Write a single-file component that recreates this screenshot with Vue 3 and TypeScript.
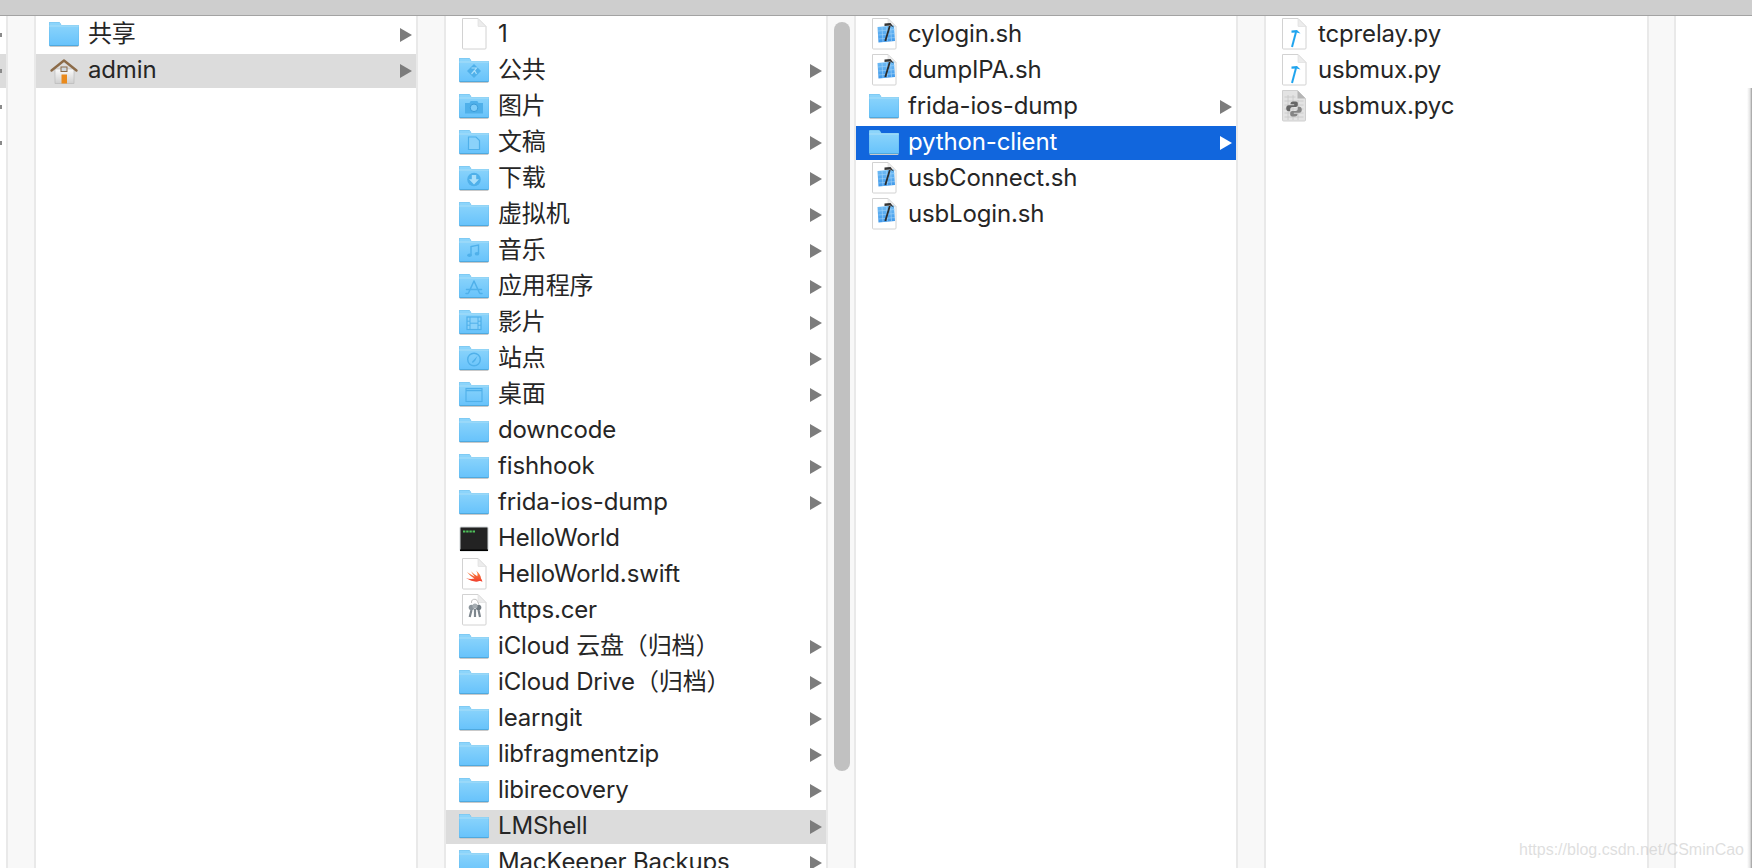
<script setup lang="ts">
interface Item {
  name: string
  icon: string
  arrow?: boolean
  state?: 'hover' | 'selected'
}
interface Pane {
  id: string
  items: Item[]
  thumb?: boolean
}

const folder = (name: string, icon = 'folder', state?: Item['state']): Item => ({ name, icon, arrow: true, state })
const file = (name: string, icon: string): Item => ({ name, icon })
const hasCjk = (name: string): boolean => /[\u3000-\u9fff\uff00-\uffef]/.test(name)

const panes: Pane[] = [
  {
    id: 'home',
    items: [folder('共享'), folder('admin', 'house', 'hover')],
  },
  {
    id: 'user',
    thumb: true,
    items: [
      file('1', 'doc'),
      folder('公共', 'public'),
      folder('图片', 'pictures'),
      folder('文稿', 'documents'),
      folder('下载', 'downloads'),
      folder('虚拟机'),
      folder('音乐', 'music'),
      folder('应用程序', 'apps'),
      folder('影片', 'movies'),
      folder('站点', 'sites'),
      folder('桌面', 'desktop'),
      folder('downcode'),
      folder('fishhook'),
      folder('frida-ios-dump'),
      file('HelloWorld', 'terminal'),
      file('HelloWorld.swift', 'swift'),
      file('https.cer', 'cert'),
      folder('iCloud 云盘（归档）'),
      folder('iCloud Drive（归档）'),
      folder('learngit'),
      folder('libfragmentzip'),
      folder('libirecovery'),
      folder('LMShell', 'folder', 'hover'),
      folder('MacKeeper Backups'),
    ],
  },
  {
    id: 'lmshell',
    items: [
      file('cylogin.sh', 'script'),
      file('dumpIPA.sh', 'script'),
      folder('frida-ios-dump'),
      folder('python-client', 'folder', 'selected'),
      file('usbConnect.sh', 'script'),
      file('usbLogin.sh', 'script'),
    ],
  },
  {
    id: 'client',
    items: [file('tcprelay.py', 'py'), file('usbmux.py', 'py'), file('usbmux.pyc', 'pyc')],
  },
]

const clippedRows = [0, 1, 2, 3]
</script>

<template>
  <div class="window">
    <svg class="sprite" aria-hidden="true">
      <defs>
        <linearGradient id="g-folder" x1="0" y1="0" x2="0" y2="1">
          <stop offset="0" stop-color="#8fd6fb" />
          <stop offset="1" stop-color="#68c3fb" />
        </linearGradient>
        <linearGradient id="g-house" x1="0" y1="0" x2="0" y2="1">
          <stop offset="0" stop-color="#fbfbfb" />
          <stop offset="1" stop-color="#cfcfcf" />
        </linearGradient>
        <linearGradient id="g-swift" x1="0" y1="0" x2="0" y2="1">
          <stop offset="0" stop-color="#fb8a3c" />
          <stop offset="1" stop-color="#f03c2e" />
        </linearGradient>
        <linearGradient id="g-blue" x1="0" y1="0" x2="0" y2="1">
          <stop offset="0" stop-color="#6fbcf5" />
          <stop offset="1" stop-color="#3f98ea" />
        </linearGradient>
        <symbol id="i-folder" viewBox="0 0 32 32">
          <rect x="1.5" y="26" width="29" height="2" rx="1" fill="#c9c9c9" />
          <path d="M2 3h8.6c.5 0 .9.2 1.2.6L13.4 6H30a1 1 0 0 1 1 1v19a1 1 0 0 1-1 1H2a1 1 0 0 1-1-1V4a1 1 0 0 1 1-1z" fill="#4fa9de" />
          <path d="M2 3.2h8.6c.5 0 .9.2 1.2.6L13.4 6.2H30a.8.8 0 0 1 .8.8v18.4a.6.6 0 0 1-.6.6H1.8a.6.6 0 0 1-.6-.6V4a.8.8 0 0 1 .8-.8z" fill="url(#g-folder)" />
          <path d="M1.2 7h29.6" stroke="#a9def8" stroke-width="1" />
        </symbol>
        <symbol id="i-public" viewBox="0 0 32 32">
          <use href="#i-folder" />
          <path d="M16 9l7 7-7 7-7-7z" fill="#4fb0ea" />
          <path d="M13.500 13h5l-2 2.500 2 3.500M16.500 15.500l-3 3.500" fill="none" stroke="#a9dffb" stroke-width="1.200" />
        </symbol>
        <symbol id="i-pictures" viewBox="0 0 32 32">
          <use href="#i-folder" />
          <path d="M7 12h4.500l1.200-2h6.600l1.200 2H25v10.500H7z" fill="#4fb0ea" />
          <circle cx="16" cy="16.800" r="3.800" fill="#7fcdf9" stroke="#3a9bd8" />
        </symbol>
        <symbol id="i-documents" viewBox="0 0 32 32">
          <use href="#i-folder" />
          <path d="M10.500 10h7.500l3.500 3.500V22.500h-11z" fill="#8bd2fa" stroke="#4fb0ea" stroke-width="1.200" />
        </symbol>
        <symbol id="i-downloads" viewBox="0 0 32 32">
          <use href="#i-folder" />
          <circle cx="16" cy="16.500" r="6.800" fill="#4fb0ea" />
          <path d="M13.800 12h4.400v4.200h2.800L16 21.400l-5-5.200h2.800z" fill="#a9dffb" />
        </symbol>
        <symbol id="i-music" viewBox="0 0 32 32">
          <use href="#i-folder" />
          <path d="M13 20V11.500l7.500-1.500v8.500" fill="none" stroke="#4fb0ea" stroke-width="1.400" />
          <ellipse cx="11.500" cy="20.300" rx="2.300" ry="1.800" fill="#4fb0ea" />
          <ellipse cx="19" cy="18.700" rx="2.300" ry="1.800" fill="#4fb0ea" />
        </symbol>
        <symbol id="i-apps" viewBox="0 0 32 32">
          <use href="#i-folder" />
          <path d="M16 10l-5.500 12M16 10l5.500 12M8.500 18.500h15M10 22.500h-2M22 22.500h2" fill="none" stroke="#4fb0ea" stroke-width="1.500" stroke-linecap="round" />
        </symbol>
        <symbol id="i-movies" viewBox="0 0 32 32">
          <use href="#i-folder" />
          <rect x="9" y="10" width="14" height="12.500" fill="#8bd2fa" stroke="#4fb0ea" stroke-width="1.200" />
          <path d="M12 10v12.500M20 10v12.500M9 14.200h3M9 18.200h3M20 14.200h3M20 18.200h3M12 16.200h8" stroke="#4fb0ea" stroke-width="1" />
        </symbol>
        <symbol id="i-sites" viewBox="0 0 32 32">
          <use href="#i-folder" />
          <circle cx="16" cy="16.500" r="6.300" fill="none" stroke="#4fb0ea" stroke-width="1.400" />
          <path d="M19.600 12.800l-2.400 4.900-2.400 2.400-1-1z" fill="#4fb0ea" />
        </symbol>
        <symbol id="i-desktop" viewBox="0 0 32 32">
          <use href="#i-folder" />
          <rect x="8" y="9.500" width="16" height="13" fill="none" stroke="#4fb0ea" stroke-width="1.100" />
          <path d="M8 11.500h16" stroke="#4fb0ea" stroke-width="1.500" />
        </symbol>
        <symbol id="i-house" viewBox="0 0 32 32">
          <rect x="7" y="14" width="19" height="14.500" fill="url(#g-house)" stroke="#b5b5b5" stroke-width=".6" />
          <path d="M3.500 15.500L16 5.500l12.500 10" fill="none" stroke="#8c6b48" stroke-width="2.400" stroke-linecap="round" stroke-linejoin="round" />
          <rect x="13" y="12" width="6" height="4.500" fill="#cfd8df" stroke="#8c6b48" stroke-width="1" />
          <rect x="13.500" y="19.500" width="5.500" height="9" fill="#ea8a1c" />
        </symbol>
        <symbol id="i-doc" viewBox="0 0 32 32" overflow="visible">
          <path d="M4.500 -.5h15.500l8 8v21.500a1 1 0 0 1-1 1H5.500a1 1 0 0 1-1-1z" fill="#fff" stroke="#d2d2d2" stroke-width="1" />
          <path d="M20 -.5v7.500a.5.500 0 0 0 .5.500H28z" fill="#ececec" stroke="#dcdcdc" stroke-width=".6" />
        </symbol>
        <symbol id="i-terminal" viewBox="0 0 32 32">
          <rect x="2" y="4" width="28" height="24" rx="1" fill="#232323" stroke="#cfd4d6" stroke-width="1" />
          <rect x="2" y="26.500" width="28" height="1.500" fill="#000" />
          <path d="M5 8.500h2.400M8.200 8.500h2.400M11.400 8.500h2.400M14.600 8.500h2.400" stroke="#4fc25a" stroke-width="1.800" />
        </symbol>
        <symbol id="i-swift" viewBox="0 0 32 32" overflow="visible">
          <use href="#i-doc" />
          <path d="M18 11.500c3 2.500 5 5.500 5 8 1 1.500 1.500 2.800 1.200 3.600-.6-1-1.700-1.400-3-1-2.800 1.300-8 .5-13.200-3 2.800 1 5.500 1.300 8.500.5-2.400-1.700-5.700-4.200-7.500-6.700 2 1.700 5.700 3.700 7.800 4.800-1.400-1.600-2.800-3.500-3.800-5.400 2 2 4.600 4 6.300 5 .6-2 .2-4-1.300-5.800z" fill="url(#g-swift)" />
        </symbol>
        <symbol id="i-cert" viewBox="0 0 32 32" overflow="visible">
          <use href="#i-doc" />
          <path d="M13.500 8a3 3 0 0 1 6-1.500l1.500 3" fill="none" stroke="#c2c2c2" stroke-width="1" />
          <path d="M13.500 15l-1.800 7M20.500 15l1.500 7M17 14v8" stroke="#7d868d" stroke-width="2.200" fill="none" />
          <circle cx="13.500" cy="12.500" r="2.800" fill="#8c959c" />
          <circle cx="20.500" cy="12.500" r="2.800" fill="#6f7980" />
          <circle cx="17" cy="11" r="2.600" fill="#a7aeb3" />
        </symbol>
        <symbol id="i-script" viewBox="0 0 32 32" overflow="visible">
          <use href="#i-doc" />
          <path d="M9.500 8l16.500-1.500 1 15.500-16.500 1.500z" fill="url(#g-blue)" />
          <path d="M10 12l16.500-1.500M10.300 16l16.500-1.500M10.500 20l16.500-1.500M14 8l1 15M18.500 7.500l1 15M22.500 7l1 15" stroke="#a3d4f8" stroke-width=".6" />
          <path d="M21.800 7l-4.500 15" stroke="#2b2b2b" stroke-width="1.800" />
          <path d="M16.500 4.500l6-.5 3.500 4.500-4-2-5.500.5z" fill="#333" />
        </symbol>
        <symbol id="i-py" viewBox="0 0 32 32" overflow="visible">
          <use href="#i-doc" />
          <path d="M18 13l-4 15" stroke="#1fa4ee" stroke-width="2" />
          <path d="M13.500 11.500l5.500-.5 3.500 3.500-4-1-5 .2z" fill="#1fa4ee" />
        </symbol>
        <symbol id="i-pyc" viewBox="0 0 32 32" overflow="visible">
          <path d="M4.500 -.5h15l8 8v21.500a1 1 0 0 1-1 1H5.500a1 1 0 0 1-1-1z" fill="#e3e3e3" stroke="#cfcfcf" stroke-width="1" />
          <path d="M19.500 -.5v8h8z" fill="#b5b5b5" />
          <path d="M6.500 6h11M6.500 10h19M6.500 14h19M6.500 18h19M6.500 22h19M6.500 26h19M10 4v25M15 4v25M20 9v20" stroke="#c6c6c6" stroke-width=".8" />
          <path d="M16 10.500c-3.200 0-3.500 1.200-3.500 2.800h3.700v1h-5.500c-1.500 0-2.500 1-2.500 3s1 3 2.500 3h1.500v-2c0-1.300 1-2.300 2.300-2.300h3.300c1.200 0 2-.9 2-2v-1.800c0-1.400-1.400-1.700-3.800-1.700z" fill="#666" />
          <path d="M16 25.500c3.200 0 3.500-1.200 3.500-2.800h-3.700v-1h5.500c1.500 0 2.500-1 2.500-3s-1-3-2.500-3h-1.500v2c0 1.300-1 2.300-2.300 2.300h-3.300c-1.200 0-2 .9-2 2v1.800c0 1.400 1.400 1.700 3.800 1.700z" fill="#858585" />
        </symbol>
      </defs>
    </svg>

    <header class="titlebar"></header>

    <main class="browser">
      <div class="clipped">
        <div v-for="i in clippedRows" :key="i" class="clipped-row" :class="{ hover: i === 1 }">
          <span class="clipped-dot"></span>
        </div>
      </div>
      <div class="track"></div>

      <template v-for="pane in panes" :key="pane.id">
        <ul class="list" :class="'list-' + pane.id">
          <li v-for="item in pane.items" :key="item.name" class="row" :class="item.state">
            <svg class="icon" width="32" height="32" viewBox="0 0 32 32">
              <use :href="'#i-' + item.icon" />
            </svg>
            <span class="name" :class="{ cjk: hasCjk(item.name) }">{{ item.name }}</span>
            <svg v-if="item.arrow" class="arrow" width="12" height="14" viewBox="0 0 12 14">
              <path d="M0 0l12 7-12 7z" />
            </svg>
          </li>
        </ul>
        <div class="track" :class="{ last: pane.id === 'client' }">
          <div v-if="pane.thumb" class="thumb"></div>
        </div>
      </template>

      <div class="tail">
        <div class="edge"></div>
        <span class="watermark">https://blog.csdn.net/CSminCao</span>
      </div>
    </main>
  </div>
</template>

<style>
html,
body {
  margin: 0;
  background: #fff;
  overflow: hidden;
}
</style>

<style scoped>
.window {
  position: relative;
  width: 1752px;
  height: 868px;
  overflow: hidden;
  background: #fff;
  font-family: Inter, "Noto Sans CJK SC", sans-serif;
  color: #262626;
}
.sprite {
  position: absolute;
  width: 0;
  height: 0;
}
.titlebar {
  height: 15px;
  background: #cecece;
  border-bottom: 1px solid #a3a3a3;
}
.browser {
  display: flex;
  height: 852px;
}
.clipped {
  width: 6px;
  flex: none;
  padding-top: 2px;
}
.clipped-row {
  height: 34px;
  margin-bottom: 2px;
  display: flex;
  align-items: center;
}
.clipped-row.hover {
  background: #dcdcdc;
}
.clipped-dot {
  width: 2px;
  height: 4px;
  background: #8a8a8a;
}
.track {
  width: 30px;
  flex: none;
  box-sizing: border-box;
  background: #f8f8f8;
  border-left: 2px solid #e9e9e9;
  border-right: 2px solid #e9e9e9;
  padding: 6px 0 0 6px;
}
.track.last {
  width: 29px;
}
.thumb {
  width: 16px;
  height: 749px;
  border-radius: 8px;
  background: #c1c1c1;
}
.list {
  list-style: none;
  margin: 0;
  padding: 2px 0 0;
  width: 380px;
  flex: none;
  box-sizing: border-box;
}
.list-client {
  width: 381px;
}
.row {
  display: flex;
  align-items: center;
  height: 34px;
  margin-bottom: 2px;
  padding: 0 4px 0 12px;
  font-size: 24px;
  white-space: nowrap;
}
.row.hover {
  background: #dcdcdc;
}
.row.selected {
  background: #1166dd;
  color: #fff;
}
.icon {
  flex: none;
  overflow: visible;
}
.name {
  margin-left: 8px;
  padding-bottom: 4px;
  letter-spacing: -0.15px;
}
.name.cjk {
  padding-bottom: 7.5px;
}
.arrow {
  margin-left: auto;
  flex: none;
  fill: #7c7c7c;
}
.row.selected .arrow {
  fill: #fff;
}
.tail {
  position: relative;
  flex: 1;
}
.edge {
  position: absolute;
  top: 72px;
  right: 0;
  bottom: 0;
  width: 5px;
  background: linear-gradient(to right, rgba(160, 160, 160, 0), rgba(150, 150, 150, 0.25) 60%, #9a9a9a);
}
.watermark {
  position: absolute;
  right: 8px;
  top: 825px;
  font: 16px "Liberation Sans", Arial, sans-serif;
  color: rgba(190, 190, 190, 0.5);
  white-space: nowrap;
}
</style>
